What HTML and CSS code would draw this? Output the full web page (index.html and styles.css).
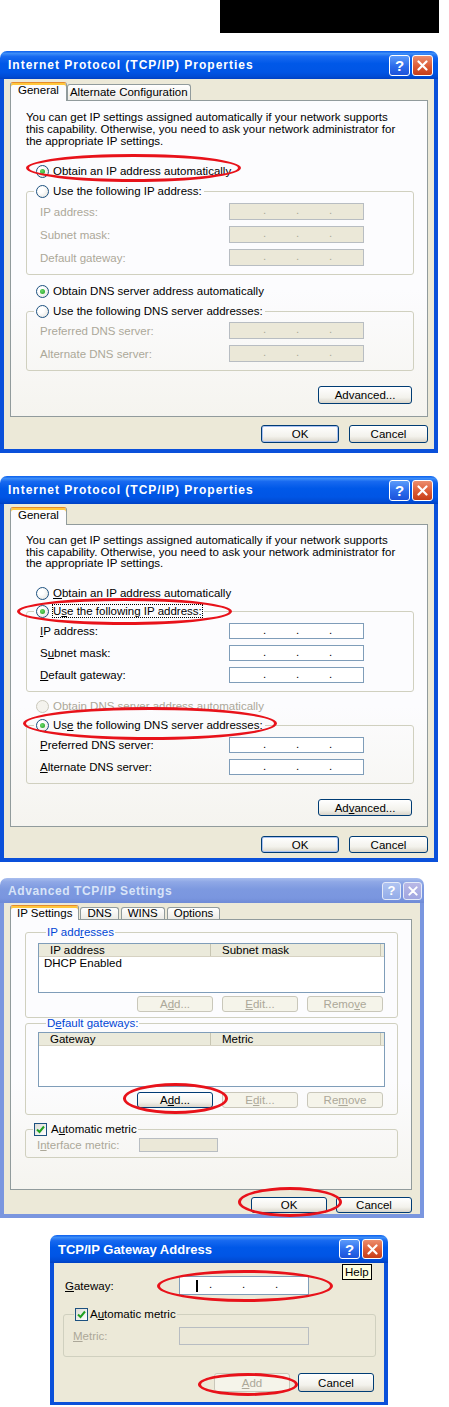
FILE: index.html
```html
<!DOCTYPE html>
<html>
<head>
  <title>TCP/IP Settings</title>
  <link rel="stylesheet" href="styles.css">
</head>
<body>
  <div class="page">
    <div class="blackbar"></div>

    <!-- dialog 1: obtain automatically -->
    <div class="dlg dlg-auto">
      <div class="titlebar">
        <span class="title">Internet Protocol (TCP/IP) Properties</span>
        <span class="tbtn tbtn-help">?</span>
        <span class="tbtn tbtn-close"><svg width="11" height="11" viewBox="0 0 11 11"><path d="M1.5 1.5 L9.5 9.5 M9.5 1.5 L1.5 9.5" stroke="#fff" stroke-width="2.2" stroke-linecap="round"/></svg></span>
      </div>
      <div class="frame">
        <div class="tabs">
          <span class="tab on">General</span>
          <span class="tab">Alternate Configuration</span>
        </div>
        <div class="panel">
          <p class="intro">You can get IP settings assigned automatically if your network supports<br>this capability. Otherwise, you need to ask your network administrator for<br>the appropriate IP settings.</p>
          <div class="opt opt-first"><span class="radio on"></span>Obtain an IP address automatically</div>
          <fieldset class="group">
            <legend><span class="lg"><span class="radio"></span>Use the following IP address:</span></legend>
            <div class="field dis"><span>IP address:</span><span class="ip"><i>.</i><i>.</i><i>.</i></span></div>
            <div class="field dis"><span>Subnet mask:</span><span class="ip"><i>.</i><i>.</i><i>.</i></span></div>
            <div class="field dis"><span>Default gateway:</span><span class="ip"><i>.</i><i>.</i><i>.</i></span></div>
          </fieldset>
          <div class="opt opt-dns"><span class="radio on"></span>Obtain DNS server address automatically</div>
          <fieldset class="group group-dns">
            <legend><span class="lg"><span class="radio"></span>Use the following DNS server addresses:</span></legend>
            <div class="field dis"><span>Preferred DNS server:</span><span class="ip"><i>.</i><i>.</i><i>.</i></span></div>
            <div class="field dis"><span>Alternate DNS server:</span><span class="ip"><i>.</i><i>.</i><i>.</i></span></div>
          </fieldset>
          <div class="btnrow btnrow-adv"><button class="btn btn-adv">Advanced...</button></div>
        </div>
        <div class="btnrow btnrow-ok">
          <button class="btn btn-ok default">OK</button>
          <button class="btn btn-cancel">Cancel</button>
        </div>
      </div>
      <span class="ring ring-obtain"></span>
    </div>

    <!-- dialog 2: manual addresses -->
    <div class="dlg dlg-manual">
      <div class="titlebar">
        <span class="title">Internet Protocol (TCP/IP) Properties</span>
        <span class="tbtn tbtn-help">?</span>
        <span class="tbtn tbtn-close"><svg width="11" height="11" viewBox="0 0 11 11"><path d="M1.5 1.5 L9.5 9.5 M9.5 1.5 L1.5 9.5" stroke="#fff" stroke-width="2.2" stroke-linecap="round"/></svg></span>
      </div>
      <div class="frame">
        <div class="tabs">
          <span class="tab on">General</span>
        </div>
        <div class="panel">
          <p class="intro">You can get IP settings assigned automatically if your network supports<br>this capability. Otherwise, you need to ask your network administrator for<br>the appropriate IP settings.</p>
          <div class="opt opt-first"><span class="radio"></span><span><u>O</u>btain an IP address automatically</span></div>
          <fieldset class="group">
            <legend><span class="lg"><span class="radio on"></span><span class="focus">U<u>s</u>e the following IP address:</span></span></legend>
            <div class="field"><span><u>I</u>P address:</span><span class="ip"><i>.</i><i>.</i><i>.</i></span></div>
            <div class="field"><span>S<u>u</u>bnet mask:</span><span class="ip"><i>.</i><i>.</i><i>.</i></span></div>
            <div class="field"><span><u>D</u>efault gateway:</span><span class="ip"><i>.</i><i>.</i><i>.</i></span></div>
          </fieldset>
          <div class="opt opt-dns dis"><span class="radio"></span>Obtain DNS server address automatically</div>
          <fieldset class="group group-dns">
            <legend><span class="lg"><span class="radio on"></span><span>Us<u>e</u> the following DNS server addresses:</span></span></legend>
            <div class="field"><span><u>P</u>referred DNS server:</span><span class="ip"><i>.</i><i>.</i><i>.</i></span></div>
            <div class="field"><span><u>A</u>lternate DNS server:</span><span class="ip"><i>.</i><i>.</i><i>.</i></span></div>
          </fieldset>
          <div class="btnrow btnrow-adv"><button class="btn btn-adv">Ad<u>v</u>anced...</button></div>
        </div>
        <div class="btnrow btnrow-ok">
          <button class="btn btn-ok default">OK</button>
          <button class="btn btn-cancel">Cancel</button>
        </div>
      </div>
      <span class="ring ring-manual"></span>
      <span class="ring ring-dns"></span>
    </div>

    <!-- dialog 3: advanced settings (inactive) -->
    <div class="dlg dlg-adv">
      <div class="titlebar">
        <span class="title">Advanced TCP/IP Settings</span>
        <span class="tbtn tbtn-help">?</span>
        <span class="tbtn tbtn-close"><svg width="10" height="10" viewBox="0 0 11 11"><path d="M1.5 1.5 L9.5 9.5 M9.5 1.5 L1.5 9.5" stroke="#fff" stroke-width="2.2" stroke-linecap="round"/></svg></span>
      </div>
      <div class="frame">
        <div class="tabs">
          <span class="tab on">IP Settings</span>
          <span class="tab">DNS</span>
          <span class="tab">WINS</span>
          <span class="tab">Options</span>
        </div>
        <div class="panel">
          <fieldset class="group group-ips">
            <legend>IP add<u>r</u>esses</legend>
            <div class="list list-ips">
              <div class="lhead"><span>IP address</span><span>Subnet mask</span></div>
              <div class="lrow">DHCP Enabled</div>
            </div>
            <div class="btnrow btnrow-list">
              <button class="btn dis">A<u>d</u>d...</button>
              <button class="btn dis"><u>E</u>dit...</button>
              <button class="btn dis">Remo<u>v</u>e</button>
            </div>
          </fieldset>
          <fieldset class="group group-gws">
            <legend>D<u>e</u>fault gateways:</legend>
            <div class="list list-gws">
              <div class="lhead"><span>Gateway</span><span>Metric</span></div>
            </div>
            <div class="btnrow btnrow-list">
              <button class="btn">A<u>d</u>d...</button>
              <button class="btn dis">E<u>d</u>it...</button>
              <button class="btn dis">Re<u>m</u>ove</button>
            </div>
          </fieldset>
          <fieldset class="group group-metric">
            <legend><span class="lg"><span class="check"><svg width="9" height="9" viewBox="0 0 9 9"><path d="M1 4.5 L3.5 7 L8 1.5" stroke="#21A121" stroke-width="2" fill="none"/></svg></span><span>A<u>u</u>tomatic metric</span></span></legend>
            <div class="field dis"><span>I<u>n</u>terface metric:</span><span class="box"></span></div>
          </fieldset>
        </div>
        <div class="btnrow btnrow-ok">
          <button class="btn btn-ok">OK</button>
          <button class="btn btn-cancel">Cancel</button>
        </div>
      </div>
      <span class="ring ring-add"></span>
      <span class="ring ring-ok"></span>
    </div>

    <!-- dialog 4: gateway address -->
    <div class="dlg dlg-gw">
      <div class="titlebar">
        <span class="title">TCP/IP Gateway Address</span>
        <span class="tbtn tbtn-help">?</span>
        <span class="tbtn tbtn-close"><svg width="11" height="11" viewBox="0 0 11 11"><path d="M1.5 1.5 L9.5 9.5 M9.5 1.5 L1.5 9.5" stroke="#fff" stroke-width="2.2" stroke-linecap="round"/></svg></span>
      </div>
      <div class="frame">
        <div class="field field-gw"><span><u>G</u>ateway:</span><span class="ip ip-gw"><b class="caret"></b><i>.</i><i>.</i><i>.</i></span></div>
        <fieldset class="group group-gwmetric">
          <legend><span class="lg"><span class="check"><svg width="9" height="9" viewBox="0 0 9 9"><path d="M1 4.5 L3.5 7 L8 1.5" stroke="#21A121" stroke-width="2" fill="none"/></svg></span><span>A<u>u</u>tomatic metric</span></span></legend>
          <div class="field dis"><span><u>M</u>etric:</span><span class="box"></span></div>
        </fieldset>
        <div class="btnrow btnrow-gw">
          <button class="btn dis"><u>A</u>dd</button>
          <button class="btn">Cancel</button>
        </div>
      </div>
      <span class="tip">Help</span>
      <span class="ring ring-gw"></span>
      <span class="ring ring-gwadd"></span>
    </div>
  </div>
</body>
</html>
```

FILE: styles.css
```css
* {
  box-sizing: border-box;
}

body {
  margin: 0;
  background: #fff;
  font-family: "Liberation Sans", Arial, sans-serif;
  font-size: 11.5px;
  color: #000;
}

.page {
  width: 449px;
}

.blackbar {
  margin-left: 220px;
  width: 219px;
  height: 33px;
  background: #000;
}

/* window chrome */
.dlg {
  position: relative;
  width: 438px;
  margin-top: 18px;
}

.titlebar {
  height: 28px;
  display: flex;
  align-items: center;
  padding: 0 5px 0 8px;
  border-radius: 7px 7px 0 0;
  background: linear-gradient(#0A5FEE 0%, #3D8DF7 9%, #1769F0 20%, #0058E8 45%, #0055E5 75%, #004BD4 92%, #0040C2 100%);
  color: #fff;
}

.title {
  flex: 1;
  font-weight: bold;
  font-size: 12px;
  letter-spacing: 1px;
  white-space: nowrap;
}

.tbtn {
  width: 21px;
  height: 21px;
  margin-left: 2px;
  border: 1px solid #fff;
  border-radius: 3px;
  display: flex;
  align-items: center;
  justify-content: center;
  color: #fff;
  font-weight: bold;
  font-size: 15px;
}

.tbtn-help {
  background: linear-gradient(#5C9BFA, #2B6BEB 55%, #1C52DA);
}

.tbtn-close {
  background: linear-gradient(#EC8E6E, #DC5B35 55%, #C63D18);
}

.frame {
  border: 4px solid #0A50DA;
  border-top: 0;
  background: #ECE9D8;
  padding: 3px 6px 6px 6px;
}

/* tabs */
.tabs {
  display: flex;
  align-items: flex-end;
  height: 18px;
}

.tab {
  height: 16px;
  line-height: 15px;
  padding: 0 2px;
  border: 1px solid #919B9C;
  border-bottom: 0;
  border-radius: 3px 3px 0 0;
  background: linear-gradient(#FFFFFF, #ECEBE6);
  white-space: nowrap;
}

.tab.on {
  position: relative;
  z-index: 1;
  height: 19px;
  margin-bottom: -1px;
  padding: 1px 7px 0;
  line-height: 13px;
  border-top-color: #E68B2C;
  box-shadow: inset 0 2px #FFC73C;
  background: #FCFCFE;
}

.panel {
  border: 1px solid #919B9C;
  background: linear-gradient(#FCFCFE 60%, #F5F4EF);
  padding: 10px 13px 12px 15px;
}

.intro {
  margin: 0;
  line-height: 12px;
  white-space: nowrap;
}

/* radios, checks, groups */
.opt {
  display: flex;
  align-items: center;
  gap: 4px;
  height: 16px;
  padding-left: 10px;
  white-space: nowrap;
}

.opt-first {
  margin-top: 16px;
}

.opt-dns {
  margin-top: 8px;
}

.radio {
  width: 13px;
  height: 13px;
  flex: none;
  border: 1px solid #1C5180;
  border-radius: 50%;
  background: radial-gradient(circle at 35% 35%, #FFFFFF 30%, #E0DFD8 100%);
  display: flex;
  align-items: center;
  justify-content: center;
}

.radio.on::after {
  content: "";
  width: 5px;
  height: 5px;
  border-radius: 50%;
  background: radial-gradient(circle at 40% 40%, #6BDB6B, #1E9A1E);
}

.check {
  width: 13px;
  height: 13px;
  flex: none;
  border: 1px solid #1C5180;
  background: linear-gradient(135deg, #DCDBD5, #FFFFFF);
  display: flex;
  align-items: center;
  justify-content: center;
}

.dis,
.dis .radio {
  color: #ACA899;
}

.opt.dis .radio {
  border-color: #CAC8BB;
  background: #F4F3EE;
}

.group {
  margin: 4px 0 0;
  padding: 4px 0 8px;
  border: 1px solid #D0D0BF;
  border-radius: 3px;
  min-width: 0;
}

.group legend {
  margin-left: 7px;
  padding: 0 2px;
  white-space: nowrap;
}

.lg {
  display: flex;
  align-items: center;
  gap: 4px;
  height: 16px;
}

.group-dns {
  padding-top: 3px;
}

.focus {
  outline: 1px dotted #000;
}

.field {
  display: grid;
  grid-template-columns: 189px 135px;
  align-items: center;
  height: 17px;
  padding-left: 13px;
  white-space: nowrap;
}

.field + .field {
  margin-top: 6px;
}

.ip {
  display: flex;
  height: 17px;
  padding-left: 18px;
  border: 1px solid #7F9DB9;
  background: #fff;
  line-height: 13px;
  color: #000;
}

.ip i {
  width: 33px;
  text-align: center;
  font-style: normal;
}

.dis .ip,
.dis .box {
  background: #EBE8D8;
  border-color: #B8BDC2;
  color: #ACA899;
}

.box {
  height: 14px;
  border: 1px solid #B8BDC2;
}

/* buttons */
.btnrow {
  display: flex;
  justify-content: flex-end;
  gap: 10px;
}

.btn {
  height: 18px;
  padding: 0;
  border: 1px solid #003C74;
  border-radius: 3px;
  background: linear-gradient(#FFFFFF, #F3F2EC 65%, #D9D5CA);
  font: inherit;
  color: #000;
}

.btn.default {
  box-shadow: inset 0 0 0 1px #A9C1F2;
}

.btn.dis {
  border-color: #C9C7BA;
  background: #F5F4EA;
  color: #ACA899;
}

.btnrow-adv {
  margin-top: 15px;
  padding-right: 2px;
}

.btn-adv {
  width: 94px;
}

.btnrow-ok {
  margin-top: 8px;
}

.btn-ok {
  width: 78px;
}

.btn-cancel {
  width: 79px;
}

/* annotation rings */
.ring {
  position: absolute;
  border: 3px solid #E8121A;
  border-radius: 50%;
}

.ring-obtain {
  left: 26px;
  top: 103px;
  width: 215px;
  height: 28px;
}

/* dialog 2 */
.dlg-manual {
  margin-top: 23px;
}

.dlg-manual .tabs {
  height: 17px;
}

.dlg-manual .tab.on {
  height: 18px;
}

.dlg-manual .intro {
  line-height: 11.5px;
}

.dlg-manual .opt-first {
  margin-top: 15.5px;
}

.dlg-manual .group {
  margin-top: 2px;
  padding-top: 4px;
}

.dlg-manual .field {
  height: 16px;
}

.dlg-manual .ip {
  height: 16px;
}

.dlg-manual .opt-dns {
  margin-top: 6px;
}

.dlg-manual .group-dns {
  margin-top: 3px;
}

.dlg-manual .btn {
  height: 17px;
}

.dlg-manual .panel {
  padding-bottom: 10px;
}

.dlg-manual .btnrow-ok {
  margin-top: 9px;
}

.dlg-manual .frame {
  padding-bottom: 5px;
}

.ring-manual {
  left: 17px;
  top: 122px;
  width: 215px;
  height: 27px;
}

.ring-dns {
  left: 23px;
  top: 231px;
  width: 254px;
  height: 33px;
}

/* dialog 3: inactive window */
.dlg-adv {
  width: 424px;
  margin-top: 16px;
}

.dlg-adv .titlebar {
  height: 25px;
  padding-right: 2px;
  background: linear-gradient(#A9BEEE 0%, #8FA8E6 15%, #7D99E0 45%, #7A96DF 80%, #6F8BD6 100%);
  color: #D8E4F8;
}

.dlg-adv .title {
  letter-spacing: 0.6px;
}

.dlg-adv .tbtn {
  width: 19px;
  height: 18px;
  border-color: #E4EAF8;
  font-size: 13px;
}

.dlg-adv .tbtn-help {
  background: linear-gradient(#AFC3F0, #93ACE8);
}

.dlg-adv .tbtn-close {
  background: linear-gradient(#B9B8E6, #9FA6E0);
}

.dlg-adv .frame {
  border-color: #7A96DF;
  padding: 2px 8px 1px 6px;
}

.dlg-adv .tabs {
  height: 14px;
  gap: 2px;
}

.dlg-adv .tab {
  height: 12px;
  line-height: 11px;
  padding: 0 6px;
}

.dlg-adv .tab.on {
  height: 15px;
  line-height: 12px;
  padding: 1px 6px 0;
  margin-right: -1px;
}

.dlg-adv .panel {
  padding: 7px 13px 31px 14px;
}

.dlg-adv .group {
  margin: 0;
  padding: 6px 12px 5px;
}

.dlg-adv .group > legend {
  margin-left: 8px;
  padding: 0 1px;
  line-height: 10px;
  color: #0046D5;
}

.group-gws {
  padding-top: 4px !important;
  padding-bottom: 6px !important;
}

.list {
  border: 1px solid #7F9DB9;
  background: #fff;
}

.list-ips {
  height: 50px;
}

.list-gws {
  height: 55px;
}

.lhead {
  display: grid;
  grid-template-columns: 172px 170px;
  height: 13px;
  line-height: 12px;
  background: #EBEADB;
  border-bottom: 1px solid #D6D2C2;
}

.lhead span {
  padding-left: 11px;
  border-right: 1px solid #C7C5B2;
}

.lrow {
  padding-left: 5px;
  line-height: 12px;
}

.btnrow-list {
  gap: 9px;
  margin-top: 3px;
  padding-right: 2px;
}

.group-gws .btnrow-list {
  margin-top: 5px;
}

.btnrow-list .btn {
  width: 76px;
  height: 16px;
}

.dlg-adv .group-metric {
  margin-top: 7px;
  padding: 2px 0 5px;
}

.dlg-adv .group-metric > legend {
  margin-left: 7px;
  line-height: normal;
  color: #000;
}

.group-metric .lg {
  height: 14px;
}

.group-metric .field {
  grid-template-columns: 102px 79px;
  height: 14px;
  padding-left: 11px;
}

.dlg-adv .btnrow-ok {
  margin-top: 7px;
  gap: 9px;
}

.dlg-adv .btnrow-ok .btn {
  width: 76px;
  height: 16px;
}

.ring-add {
  left: 123px;
  top: 205px;
  width: 105px;
  height: 31px;
}

.ring-ok {
  left: 238px;
  top: 309px;
  width: 104px;
  height: 30px;
}

/* dialog 4 */
.dlg-gw {
  width: 338px;
  margin: 17px 0 0 50px;
}

.dlg-gw .title {
  font-size: 13px;
  letter-spacing: 0;
}

.dlg-gw .tbtn {
  width: 21px;
  height: 20px;
}

.dlg-gw .frame {
  padding: 13px 8px 10px 9px;
  border-bottom-width: 3px;
}

.field-gw {
  grid-template-columns: 114px 130px;
  height: 19px;
  padding-left: 2px;
}

.ip-gw {
  position: relative;
  height: 19px;
  padding-left: 14px;
  line-height: 15px;
}

.caret {
  position: absolute;
  left: 16px;
  top: 3px;
  width: 2px;
  height: 12px;
  background: #000;
}

.group-gwmetric {
  margin: 12px 0 0;
  padding: 6px 0 11px;
}

.group-gwmetric legend {
  margin-left: 10px;
  padding: 0 1px;
}

.group-gwmetric .lg {
  height: 14px;
  gap: 2px;
}

.group-gwmetric .field {
  grid-template-columns: 106px 130px;
  height: 18px;
  padding-left: 9px;
}

.group-gwmetric .box {
  height: 18px;
}

.btnrow-gw {
  margin-top: 16px;
  gap: 8px;
  padding-right: 2px;
}

.btnrow-gw .btn {
  width: 76px;
  height: 19px;
}

.tip {
  position: absolute;
  left: 292px;
  top: 29px;
  height: 16px;
  padding: 0 2px;
  border: 1px solid #000;
  background: #FFFFE1;
  line-height: 14px;
}

.ring-gw {
  left: 107px;
  top: 35px;
  width: 176px;
  height: 32px;
}

.ring-gwadd {
  left: 148px;
  top: 138px;
  width: 100px;
  height: 23px;
}
```
